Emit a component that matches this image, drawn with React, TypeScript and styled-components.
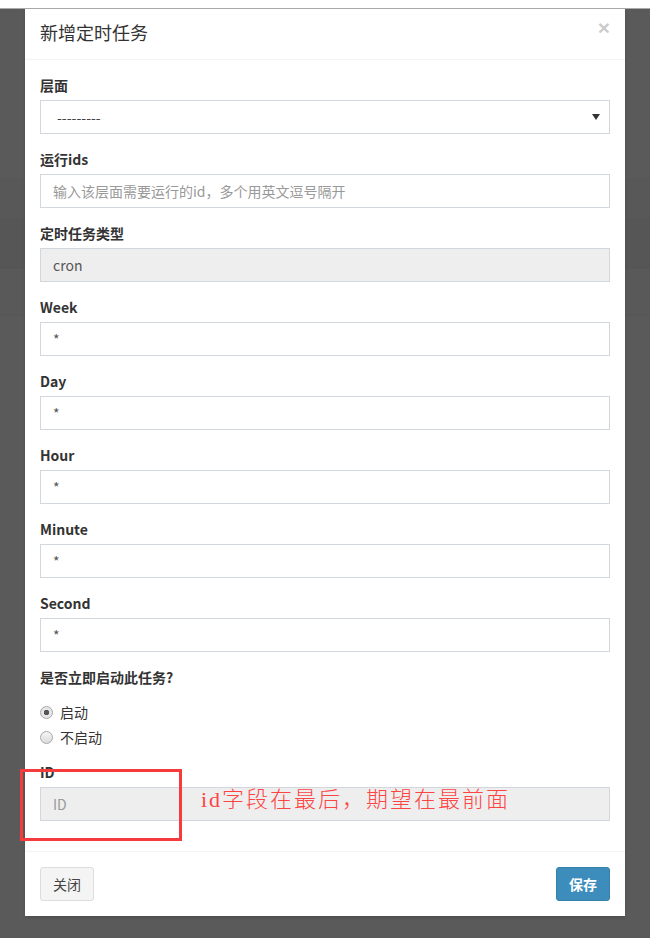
import React from 'react';
import styled, { createGlobalStyle } from 'styled-components';

const Global = createGlobalStyle`
  html, body { margin: 0; padding: 0; background: #5a5a5a; }
  body { font-family: "Noto Sans CJK SC", "Noto Sans", sans-serif; color: #333; }
  * { box-sizing: border-box; }
`;

const Page = styled.div`
  position: relative;
  width: 650px;
  height: 938px;
  overflow: hidden;
  display: flex;
  flex-direction: column;
`;

const TopStrip = styled.div`
  flex: none;
  height: 9px;
  background: #fff;
  border-bottom: 1px solid #a9a9a9;
`;

const Backdrop = styled.div`
  flex: 1;
  padding: 0 25px;
  background: linear-gradient(
    to bottom,
    #5a5a5a 0px, #5a5a5a 170px,
    #565656 171px, #585858 172px, #585858 210px,
    #545454 211px, #565656 212px, #565656 258px,
    #545454 259px, #595959 260px, #595959 305px,
    #555555 306px, #5a5a5a 307px, #5a5a5a 100%
  );
`;

const Modal = styled.div`
  width: 600px;
  background: #fff;
  box-shadow: 0 2px 3px rgba(0, 0, 0, 0.125);
`;

const Header = styled.div`
  display: flex;
  justify-content: space-between;
  align-items: flex-start;
  padding: 10px 15px 14px;
  border-bottom: 1px solid #f4f4f4;
`;

const Title = styled.h4`
  margin: 0;
  font-size: 18px;
  font-weight: 400;
  line-height: 26px;
  color: #333;
`;

const CloseX = styled.button`
  margin-top: -2px;
  padding: 0;
  border: 0;
  background: none;
  font-family: "Liberation Sans", sans-serif;
  font-size: 21px;
  font-weight: 700;
  line-height: 21px;
  color: #000;
  opacity: 0.2;
  cursor: pointer;
`;

const Body = styled.div`
  padding: 15px;
`;

const FormGroup = styled.div`
  margin-bottom: 15px;
`;

const Label = styled.label`
  display: block;
  margin-bottom: 5px;
  font-size: 14px;
  font-weight: 700;
  line-height: 20px;
  color: #333;
`;

const Input = styled.input`
  display: block;
  width: 100%;
  height: 34px;
  padding: 6px 12px;
  border: 1px solid #d2d6de;
  border-radius: 0;
  background: ${(p) => (p.disabled ? '#eee' : '#fff')};
  font-family: inherit;
  font-size: 14px;
  line-height: 20px;
  color: #555;
  outline: none;
  &::placeholder {
    color: #999;
  }
`;

const SelectBox = styled.div`
  display: flex;
  align-items: center;
  justify-content: space-between;
  height: 34px;
  padding: 6px 9px 6px 16px;
  border: 1px solid #d2d6de;
  background: #fff;
  font-size: 14px;
  line-height: 20px;
  color: #444;
`;

const Caret = styled.span`
  width: 0;
  height: 0;
  border-left: 4px solid transparent;
  border-right: 4px solid transparent;
  border-top: 6px solid #333;
`;

const RadioList = styled.div`
  display: flex;
  flex-direction: column;
  gap: 5px;
  padding-top: 10px;
`;

const RadioItem = styled.label`
  display: flex;
  align-items: center;
  gap: 7px;
  height: 20px;
  font-size: 14px;
  font-weight: 400;
  color: #333;
`;

const RadioInput = styled.input`
  appearance: none;
  margin: 0;
  width: 13px;
  height: 13px;
  border-radius: 50%;
  border: 1px solid #a8a8a8;
  background: linear-gradient(#f4f4f4, #dcdcdc);
  &:checked {
    background: radial-gradient(circle, #555 0, #555 2.5px, #e6e6e6 3px, #e6e6e6 100%);
  }
`;

const Footer = styled.div`
  display: flex;
  justify-content: space-between;
  padding: 15px;
  border-top: 1px solid #f4f4f4;
`;

const Button = styled.button<{ $primary?: boolean }>`
  height: 34px;
  padding: 6px 12px;
  border-radius: 3px;
  border: 1px solid ${(p) => (p.$primary ? '#367fa9' : '#ddd')};
  background: ${(p) => (p.$primary ? '#3c8dbc' : '#f4f4f4')};
  color: ${(p) => (p.$primary ? '#fff' : '#444')};
  font-family: inherit;
  font-size: 14px;
  font-weight: ${(p) => (p.$primary ? 700 : 400)};
  line-height: 20px;
  cursor: pointer;
`;

const MarkBox = styled.div`
  position: absolute;
  left: 20px;
  top: 769px;
  width: 162px;
  height: 72px;
  border: 3px solid #f53b3b;
`;

const MarkText = styled.div`
  position: absolute;
  left: 201px;
  top: 785px;
  font-family: "Liberation Serif", "Noto Sans CJK SC", serif;
  font-size: 22px;
  line-height: 30px;
  letter-spacing: 2px;
  font-weight: 300;
  color: #f44;
  white-space: nowrap;
`;

const cronFields = ['Week', 'Day', 'Hour', 'Minute', 'Second'];

export default function App() {
  return (
    <Page>
      <Global />
      <TopStrip />
      <Backdrop>
        <Modal>
          <Header>
            <Title>新增定时任务</Title>
            <CloseX aria-label="close">×</CloseX>
          </Header>
          <Body>
            <FormGroup>
              <Label>层面</Label>
              <SelectBox>
                <span>---------</span>
                <Caret />
              </SelectBox>
            </FormGroup>
            <FormGroup>
              <Label>运行ids</Label>
              <Input placeholder="输入该层面需要运行的id，多个用英文逗号隔开" />
            </FormGroup>
            <FormGroup>
              <Label>定时任务类型</Label>
              <Input disabled value="cron" readOnly />
            </FormGroup>
            {cronFields.map((f) => (
              <FormGroup key={f}>
                <Label>{f}</Label>
                <Input value="*" readOnly />
              </FormGroup>
            ))}
            <FormGroup>
              <Label>是否立即启动此任务?</Label>
              <RadioList>
                <RadioItem>
                  <RadioInput type="radio" name="start" defaultChecked />
                  启动
                </RadioItem>
                <RadioItem>
                  <RadioInput type="radio" name="start" />
                  不启动
                </RadioItem>
              </RadioList>
            </FormGroup>
            <FormGroup>
              <Label>ID</Label>
              <Input disabled placeholder="ID" />
            </FormGroup>
          </Body>
          <Footer>
            <Button>关闭</Button>
            <Button $primary>保存</Button>
          </Footer>
        </Modal>
      </Backdrop>
      <MarkBox />
      <MarkText>id字段在最后，期望在最前面</MarkText>
    </Page>
  );
}
